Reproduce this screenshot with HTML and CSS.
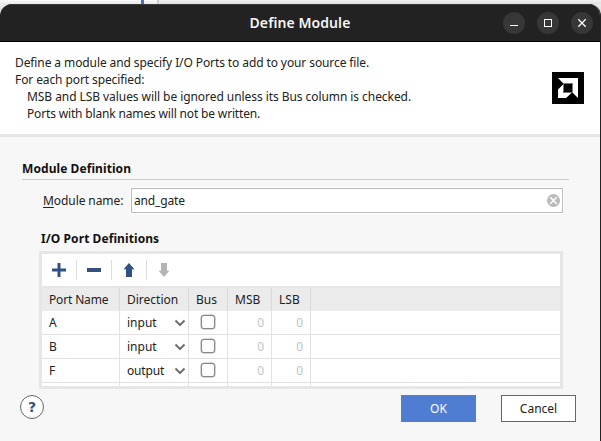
FILE: index.html
```html
<!DOCTYPE html>
<html lang="en">
<head>
<meta charset="utf-8">
<title>Define Module</title>
<link rel="stylesheet" href="styles.css">
</head>
<body>
<div class="backdrop"><span class="mark"></span><span class="pane"></span></div>
<div class="dialog">
  <header class="titlebar">
    <h1>Define Module</h1>
    <div class="controls">
      <svg width="22" height="22"><circle cx="11" cy="11" r="11" fill="#373737"/><path d="M7 13.500h8" stroke="#fff"/></svg>
      <svg width="22" height="22"><circle cx="11" cy="11" r="11" fill="#373737"/><rect x="7.500" y="7.500" width="7" height="7" fill="none" stroke="#fff"/></svg>
      <svg width="22" height="22"><circle cx="11" cy="11" r="11" fill="#373737"/><path d="M7.300 7.300l7.400 7.400M14.700 7.300l-7.400 7.400" stroke="#fff" stroke-width="1.300"/></svg>
    </div>
  </header>
  <section class="intro">
    <div class="intro-text">
      <p class="snug">Define a module and specify I/O Ports to add to your source file.</p>
      <p class="snug">For each port specified:</p>
      <p class="indent">MSB and LSB values will be ignored unless its Bus column is checked.</p>
      <p class="indent tight">Ports with blank names will not be written.</p>
    </div>
    <svg class="logo" width="32" height="32"><path d="M0 0h32v32H0z"/><path d="M6 6h20v20l-5.500-5.500V11.500h-9z M11 12.500v8.500h8.500L14 26H6v-8.500z" fill="#fff"/><path d="M11.500 11.500h9v9h-9z" stroke="#777"/></svg>
  </section>
  <main class="content">
    <h2 class="section-title">Module Definition</h2>
    <div class="field">
      <label><u>M</u>odule name:</label>
      <div class="input"><span>and_gate</span>
        <svg width="13" height="13"><circle cx="6.500" cy="6.500" r="6.500" fill="#bbb"/><path d="M3.300 3.300l6.400 6.400M9.700 3.300l-6.400 6.400" stroke="#fff" stroke-width="1.600"/></svg>
      </div>
    </div>
    <h3 class="ports-title">I/O Port Definitions</h3>
    <div class="ports">
      <div class="toolbar">
        <div class="tool"><svg width="14" height="14"><path d="M7 0v14M0 7h14" stroke="#335082" stroke-width="3"/></svg></div>
        <div class="tool"><svg width="14" height="14"><path d="M0 7h14" stroke="#335082" stroke-width="4"/></svg></div>
        <div class="tool"><svg width="14" height="14"><path d="M7 0l5.500 6.300H10V14H4V6.300H1.500z" fill="#335082"/></svg></div>
        <div class="tool"><svg width="14" height="14"><path d="M7 14l5.500-6.300H10V0H4v7.700H1.500z" fill="#b4b4b4"/></svg></div>
      </div>
      <div class="row head"><div class="tight">Port Name</div><div>Direction</div><div>Bus</div><div>MSB</div><div>LSB</div><div></div></div>
      <div class="row"><div>A</div><div class="select">input<svg width="12" height="8"><path d="M1.500 1.500L6 6l4.500-4.500" fill="none" stroke="#707070" stroke-width="2"/></svg></div><div class="bus"><i class="check"></i></div><div class="num">0</div><div class="num">0</div><div></div></div>
      <div class="row"><div>B</div><div class="select">input<svg width="12" height="8"><path d="M1.500 1.500L6 6l4.500-4.500" fill="none" stroke="#707070" stroke-width="2"/></svg></div><div class="bus"><i class="check"></i></div><div class="num">0</div><div class="num">0</div><div></div></div>
      <div class="row"><div>F</div><div class="select tight">output<svg width="12" height="8"><path d="M1.500 1.500L6 6l4.500-4.500" fill="none" stroke="#707070" stroke-width="2"/></svg></div><div class="bus"><i class="check"></i></div><div class="num">0</div><div class="num">0</div><div></div></div>
      <div class="row"><div></div><div></div><div></div><div></div><div></div><div></div></div>
    </div>
  </main>
  <footer class="footer">
    <div class="help">?</div>
    <div class="btn ok">OK</div>
    <div class="btn cancel">Cancel</div>
  </footer>
</div>
</body>
</html>
```
FILE: styles.css
```css
* { box-sizing: border-box; }
body {
  margin: 0;
  height: 441px;
  overflow: hidden;
  background: linear-gradient(#f0f0f0, #c8c8c8 24px);
  font: 12px/17px "Noto Sans", sans-serif;
  color: #222;
}
h1, h2, h3, p { margin: 0; }
svg { display: block; flex: none; }
.backdrop { height: 4px; display: flex; background: linear-gradient(#fafafa, #e8e8e8); }
.mark { width: 3px; margin-left: 141px; background: #4472c4; }
.pane { flex: 1; margin-left: 13px; border-left: 2px solid #ccc; background: linear-gradient(#f0f0f0, #e0e0e0); }
.dialog {
  height: 437px;
  border-right: 1px solid #222;
  border-radius: 12px 12px 0 0;
  background: #f7f7f7;
  overflow: hidden;
}
.titlebar {
  height: 38px;
  display: grid;
  grid-template-columns: 1fr auto 1fr;
  align-items: center;
  background: #222;
  border-top: 1px solid #383838;
  border-bottom: 1px solid #000;
}
.titlebar h1 { grid-column: 2; font-size: 14px; line-height: 20px; font-weight: 600; letter-spacing: .08px; color: #f5f5f5; }
.controls { display: flex; gap: 12px; justify-content: flex-end; padding-right: 7px; }
.intro {
  height: 95px;
  display: flex;
  justify-content: space-between;
  padding: 12px 16px 0 15px;
  background: #fff;
  border-bottom: 3px solid #e6e6e6;
}
.snug { letter-spacing: -.1px; }
.indent { padding-left: 12px; letter-spacing: -.065px; }
.tight, .indent.tight { letter-spacing: -.16px; }
.logo { margin-top: 18px; }
.content { padding: 23px 31px 0 22px; height: 252px; }
.section-title, .ports-title { font-size: 12px; line-height: 17px; font-weight: 700; letter-spacing: .08px; color: #111; }
.section-title { height: 20px; border-bottom: 1px solid #ccc; }
.field { display: flex; margin-top: 8px; height: 25px; align-items: center; }
.field label { width: 88px; margin-left: 21px; flex: none; letter-spacing: -.08px; }
.field u { text-underline-offset: 2px; }
.input {
  width: 432px;
  height: 25px;
  display: flex;
  flex: none;
  align-items: center;
  justify-content: space-between;
  padding: 0 2px;
  background: #fff;
  border: 1px solid #bbb;
  box-shadow: 0 0 0 1px #fff;
  letter-spacing: -.16px;
}
.ports-title { margin: 17px 0 4px 19px; }
.ports { width: 524px; height: 138px; margin-left: 17px; border: 3px solid #e6e6e6; background: #fff; overflow: hidden; }
.toolbar { height: 34px; display: flex; align-items: center; border-bottom: 2px solid #e6e6e6; }
.tool { width: 35px; height: 20px; padding: 3px 0 0 10px; border-right: 1px solid #ddd; }
.tool:last-child { border: 0; }
.row {
  height: 24px;
  display: grid;
  grid-template-columns: 78px 69px 39px 44px 39px 1fr;
  border-bottom: 1px solid #e2e2e2;
}
.row > div { padding: 3px 0 0 7px; border-right: 1px solid #e2e2e2; }
.row > div:last-child { border-right: 0; }
.head { height: 23px; background: #ebebeb; border-bottom: 0; }
.head > div { border-color: #dadada; }
.row .select { display: flex; justify-content: space-between; padding-right: 2px; }
.select svg { margin-top: 5px; }
.row .bus { padding: 4px 0 0 12px; }
.check { display: block; width: 14px; height: 14px; border: 1px solid #888; border-radius: 3px; background: #fff; box-shadow: 0 0 0 .5px #aaa; }
.row .num { color: #c3c3c3; text-align: right; padding-right: 7px; }
.footer { display: flex; padding: 6px 24px 0 20px; }
.help {
  width: 24px;
  height: 24px;
  margin-right: auto;
  border: 1px solid #666;
  border-radius: 50%;
  background: #fff;
  color: #335082;
  font-family: "DejaVu Sans", sans-serif;
  font-size: 14px;
  line-height: 22px;
  font-weight: 700;
  text-align: center;
}
.btn { width: 75px; height: 27px; line-height: 27px; text-align: center; }
.ok { background: #4f7dd1; color: #fff; }
.cancel { margin-left: 25px; border: 1px solid #666; background: #fff; line-height: 25px; }
```
